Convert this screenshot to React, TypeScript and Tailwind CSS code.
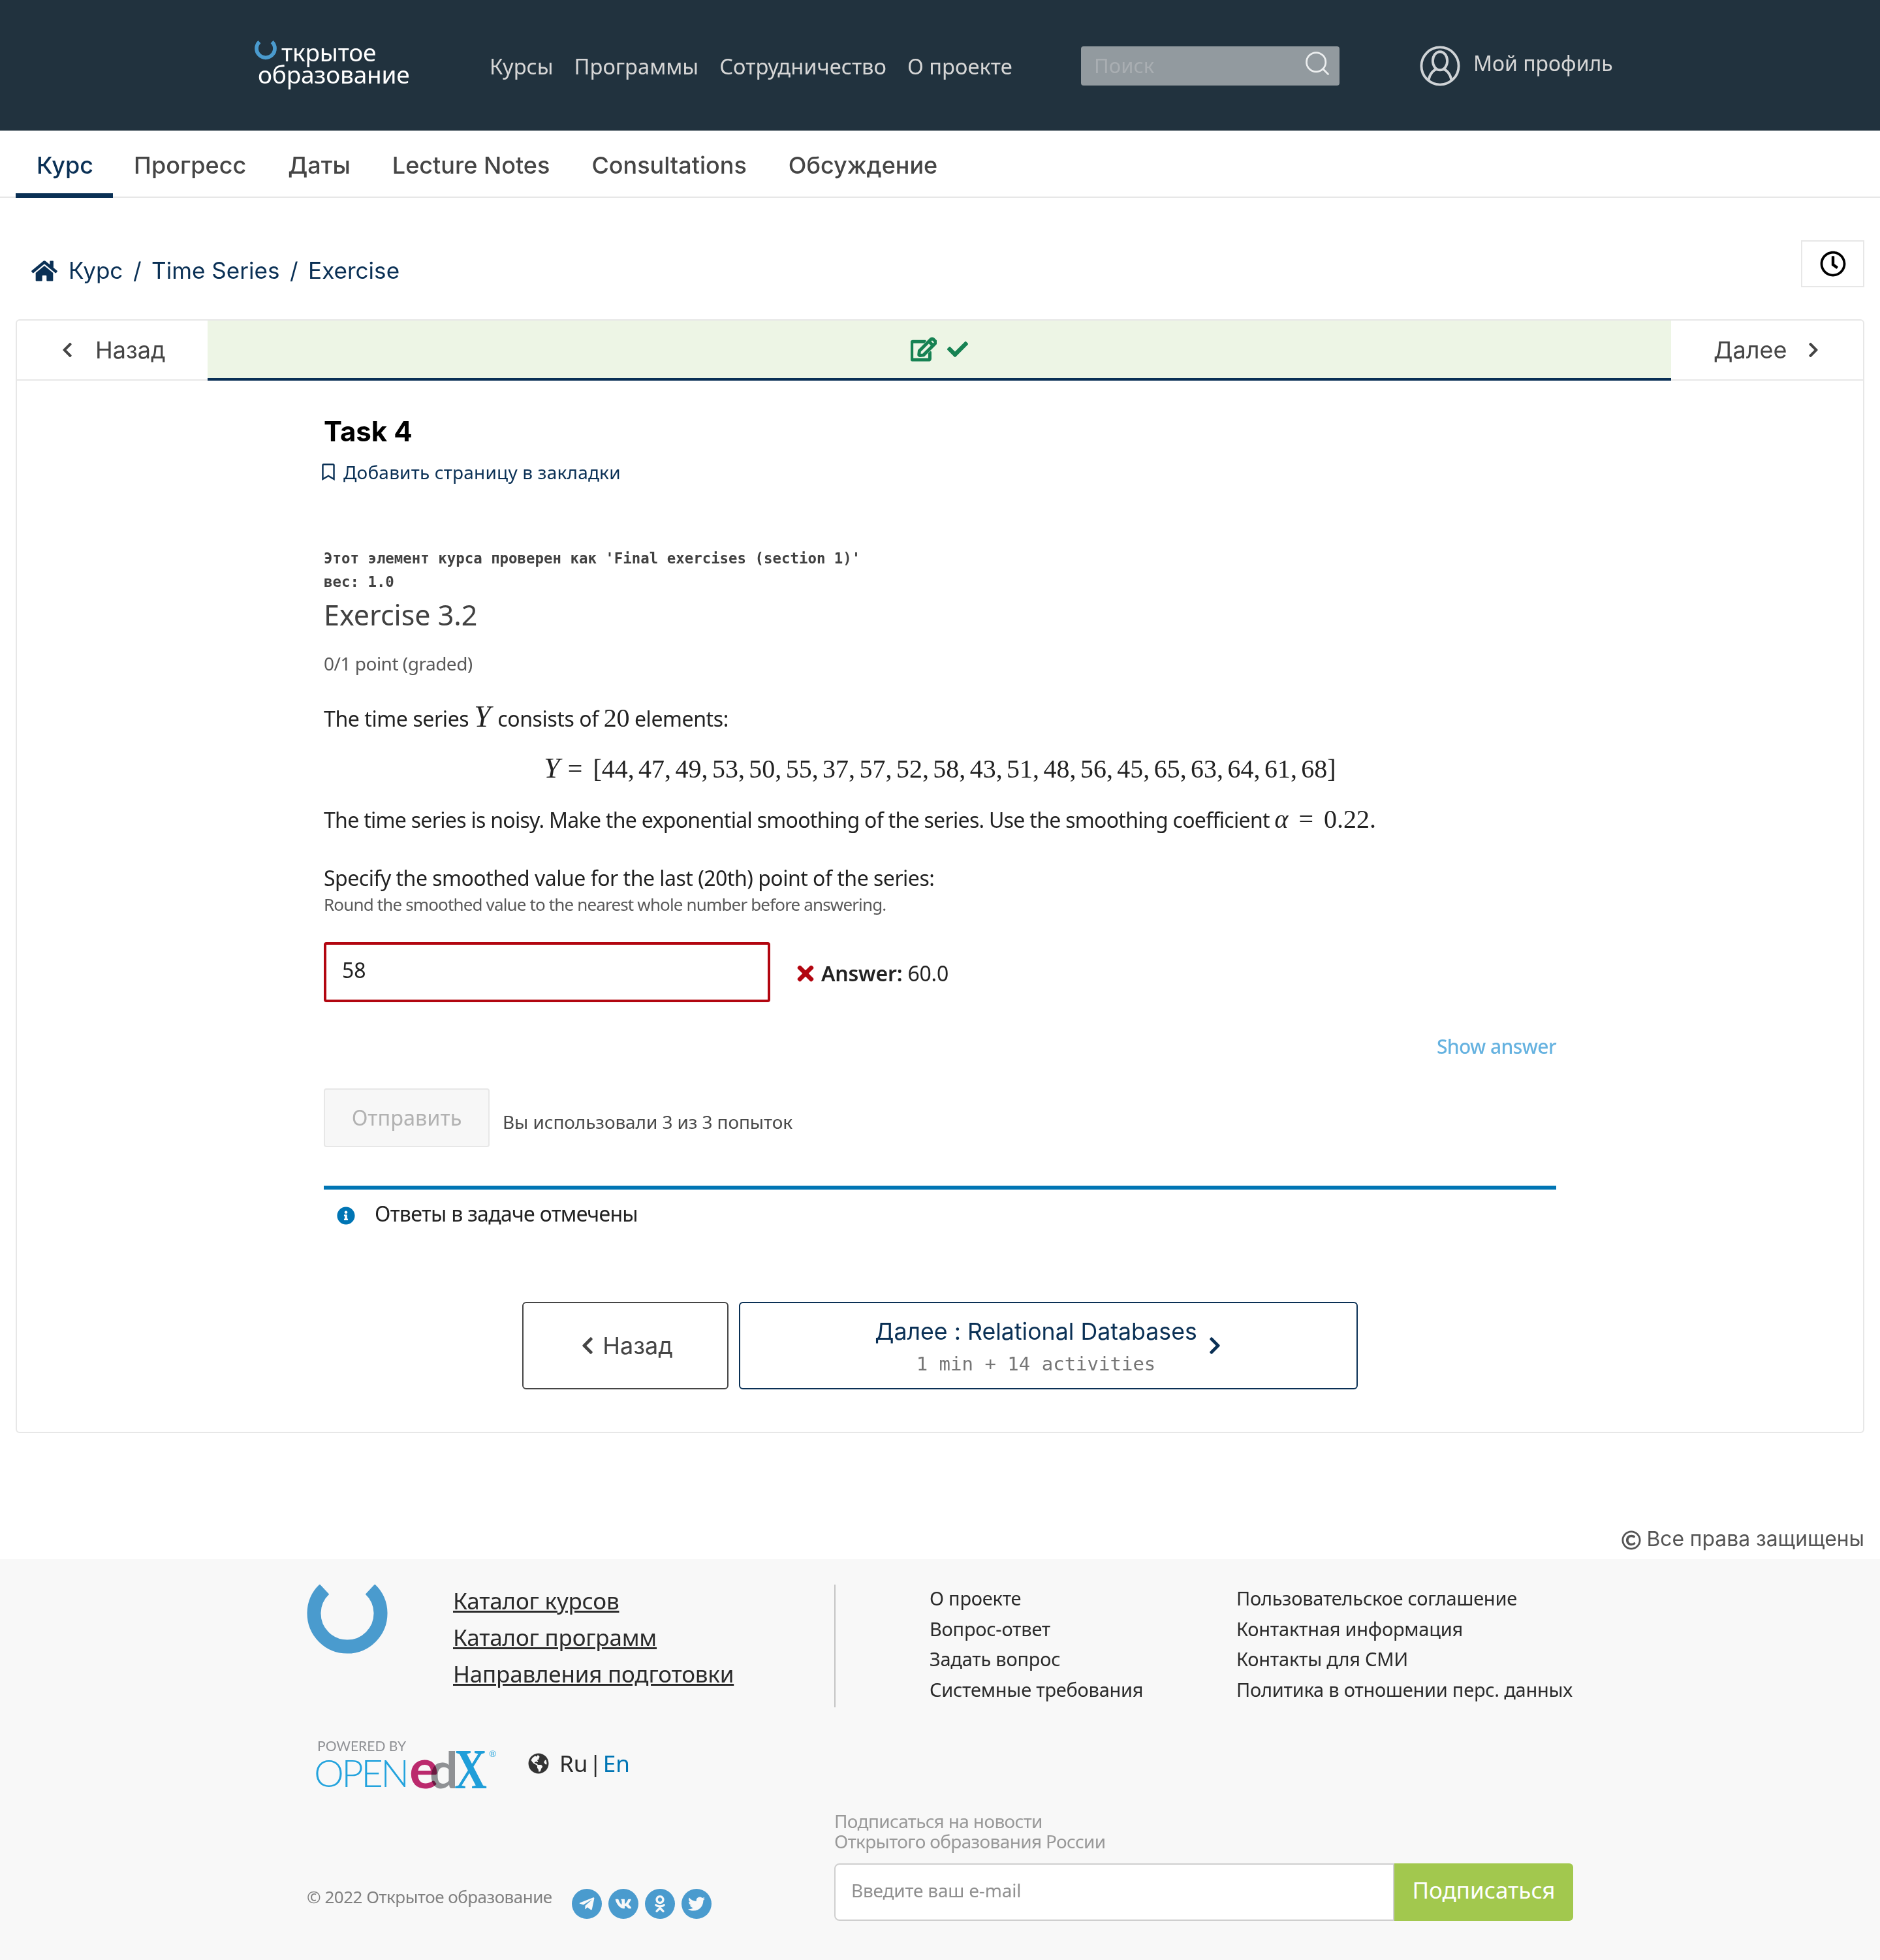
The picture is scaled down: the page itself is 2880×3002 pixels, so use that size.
import { Search } from 'lucide-react';
import {
  FaCheck,
  FaChevronLeft,
  FaChevronRight,
  FaGlobeAmericas,
  FaHome,
  FaInfoCircle,
  FaOdnoklassniki,
  FaRegBookmark,
  FaRegClock,
  FaRegCopyright,
  FaRegEdit,
  FaTelegramPlane,
  FaTimes,
  FaTwitter,
  FaVk,
} from 'react-icons/fa';

const inter = "font-['Inter',sans-serif]";
const noto = "font-['Noto_Sans',sans-serif]";
const serif = "font-['Liberation_Serif',serif]";

const navLinks = ['Курсы', 'Программы', 'Сотрудничество', 'О проекте'];
const tabs = ['Курс', 'Прогресс', 'Даты', 'Lecture Notes', 'Consultations', 'Обсуждение'];
const series = '44, 47, 49, 53, 50, 55, 37, 57, 52, 58, 43, 51, 48, 56, 45, 65, 63, 64, 61, 68';
const footerLeft = ['О проекте', 'Вопрос-ответ', 'Задать вопрос', 'Системные требования'];
const footerRight = [
  'Пользовательское соглашение',
  'Контактная информация',
  'Контакты для СМИ',
  'Политика в отношении перс. данных',
];

const Ring = ({ className }: { className: string }) => (
  <svg viewBox="0 0 124 108" className={className} fill="none">
    <path d="M27 7 A 51 51 0 1 0 97 7" stroke="#4a9bce" strokeWidth="21" />
  </svg>
);

const ProfileIcon = () => (
  <svg viewBox="0 0 64 64" className="h-[62px] w-[62px]" fill="none" stroke="#cfd3d6" strokeWidth="4">
    <circle cx="32" cy="32" r="29.5" />
    <ellipse cx="32" cy="24" rx="11.5" ry="14.5" />
    <path d="M14 54 C 16 44 22 38 27 37 M50 54 C 48 44 42 38 37 37" />
  </svg>
);

const EdxLogo = () => (
  <svg viewBox="0 -10 280 114" className="-mb-[20px] -mt-[10px] h-[114px] w-[280px]">
    <text x="4" y="21" fontFamily="Lato, sans-serif" fontSize="21" textLength="136" fill="#8f9195">
      POWERED BY
    </text>
    <text x="-1" y="76" fontFamily="Lato, sans-serif" fontWeight="300" fontSize="58" textLength="146" fill="#23a3dd">
      OPEN
    </text>
    <text x="145" y="78" fontFamily="Lato, sans-serif" fontWeight="700" fontSize="84" fill="#bb2a6d">
      e
    </text>
    <text x="176" y="78" fontFamily="Lato, sans-serif" fontWeight="700" fontSize="77" fill="#939598" className="mix-blend-multiply">
      d
    </text>
    <text
      x="214"
      y="78"
      fontFamily="'Liberation Serif', serif"
      fontWeight="700"
      fontSize="86"
      textLength="50"
      lengthAdjust="spacingAndGlyphs"
      fill="#1fa3df"
      className="mix-blend-multiply"
    >
      X
    </text>
    <text x="267" y="30" fontFamily="Lato, sans-serif" fontSize="14" fill="#23a3dd">
      ®
    </text>
  </svg>
);

const SocialIcon = ({ children }: { children: React.ReactNode }) => (
  <span className="flex h-[46px] w-[46px] items-center justify-center rounded-full bg-[#4a9bce] text-[26px] text-[#f8f8f8]">
    {children}
  </span>
);

export default function App() {
  return (
    <div className={`w-[2880px] bg-white ${noto}`}>
      <header className="flex h-[200px] items-center bg-[#21323e] pl-[390px]">
        <div className="relative mb-[2px] h-[72px] w-[360px] text-[37px] leading-[34px] tracking-[-0.2px] text-white">
          <Ring className="absolute left-0 top-[-1px] h-[30px] w-[34px]" />
          <div className="pl-[41px]">ткрытое</div>
          <div className="pl-[5px]">образование</div>
        </div>
        <nav className="mt-[4px] flex w-[906px] gap-[32px] text-[32.7px] text-[#d6d6d6]">
          {navLinks.map((item) => (
            <span key={item}>{item}</span>
          ))}
        </nav>
        <div className="mb-[-2px] flex h-[60px] w-[396px] items-center justify-between rounded-[4px] bg-[#929a9f] pl-[20px] pr-[12px]">
          <span className="mb-[2px] text-[31px] text-[#a9aeb2]">Поиск</span>
          <Search size={44} strokeWidth={1.5} color="#eceeef" className="mb-[8px]" />
        </div>
        <div className="mb-[-2px] ml-[123px] flex items-center gap-[20px] text-[32px] text-[#d6d6d6]">
          <ProfileIcon />
          <span className="mb-[8px]">Мой профиль</span>
        </div>
      </header>

      <div className={`flex h-[103px] border-b-2 border-[#e7e7e7] px-[24px] text-[36px] font-medium ${inter}`}>
        {tabs.map((tab, i) => (
          <div
            key={tab}
            className={`flex h-[103px] items-center ${i === 0 ? 'pl-[32px] pr-[30px]' : 'px-[32px]'} ${
              i === 0 ? 'border-b-[7px] border-[#0a3055] pt-[10px] text-[#0a3055]' : 'pt-[3px] text-[#454545]'
            }`}
          >
            {tab}
          </div>
        ))}
      </div>

      <div className={`flex h-[186px] items-start justify-between px-[24px] pt-[65px] text-[35.1px] text-[#0a3055] ${inter}`}>
        <div className="flex h-[71px] items-center pl-[24px] pt-[22px]">
          <FaHome size={40} className="mr-[17px]" />
          <span>Курс</span>
          <span className="mx-[15.5px]">/</span>
          <span>Time Series</span>
          <span className="mx-[15.5px]">/</span>
          <span>Exercise</span>
        </div>
        <div className="flex h-[72px] w-[97px] items-center justify-center border-2 border-[#e7e7e7]">
          <FaRegClock size={40} color="#000" />
        </div>
      </div>

      <main className="mx-[24px] h-[1706px] rounded-[6px] border-2 border-[#e7e7e7]">
        <div className={`flex h-[92px] text-[36px] text-[#454545] ${inter}`}>
          <div className="flex w-[292px] items-center gap-[30px] border-b-2 border-[#e7e7e7] pl-[64px]">
            <FaChevronLeft size={26} />
            <span>Назад</span>
          </div>
          <div className="flex flex-1 items-center justify-center gap-[16px] border-b-4 border-[#0a3055] bg-[#edf5e5] text-[#178253]">
            <FaRegEdit size={40} stroke="currentColor" strokeWidth={24} />
            <FaCheck size={32} />
          </div>
          <div className="flex w-[294px] items-center gap-[28px] border-b-2 border-[#e7e7e7] pl-[65px]">
            <span>Далее</span>
            <FaChevronRight size={26} />
          </div>
        </div>

        <section className="mx-[470px] pt-[48px]">
          <h1 className={`text-[42px] font-bold leading-[60px] text-black ${inter}`}>Task 4</h1>
          <div className="ml-[-6px] mt-[12px] flex items-center gap-[10px] text-[28px] leading-[40px] tracking-[0.2px] text-[#0a3055]">
            <FaRegBookmark size={26} />
            <span>Добавить страницу в закладки</span>
          </div>

          <div className="mt-[94px] font-['DejaVu_Sans_Mono',monospace] text-[22.4px] font-bold leading-[36px] text-[#414141]">
            <div>Этот элемент курса проверен как 'Final exercises (section 1)'</div>
            <div>вес: 1.0</div>
          </div>
          <h2 className="mt-[3px] text-[43px] leading-[60px] text-[#414141]">Exercise 3.2</h2>
          <div className="mt-[24px] text-[28px] leading-[40px] tracking-[-0.5px] text-[#595959]">0/1 point (graded)</div>

          <p className="mt-[40px] h-[44px] text-[32px] leading-[44px] tracking-[-0.4px] text-[#222]">
            The time series <span className={`${serif} mr-[3px] text-[46px] leading-[44px] italic`}>Y</span> consists of{' '}
            <span className={`${serif} text-[40px] leading-[44px]`}>20</span> elements:
          </p>
          <div className={`mt-[34px] text-center ${serif} text-[40px] leading-[46px] text-[#222] [word-spacing:-3.6px]`}>
            <i className="mr-[12px] text-[44px] leading-[46px]">Y</i>
            <span className="mr-[16px]">=</span>[{series}]
          </div>
          <p className="mt-[32px] h-[44px] text-[32px] leading-[44px] tracking-[-0.7px] text-[#222]">
            The time series is noisy. Make the exponential smoothing of the series. Use the smoothing coefficient{' '}
            <span className={`${serif} text-[40px] leading-[44px] tracking-normal`}>
              <i>α</i>
              <span className="mx-[6px]"> = </span>0.22.
            </span>
          </p>
          <p className="mt-[46px] text-[32px] leading-[44px] tracking-[-0.5px] text-[#222]">
            Specify the smoothed value for the last (20th) point of the series:
          </p>
          <p className="text-[26px] leading-[36px] tracking-[-0.85px] text-[#595959]">
            Round the smoothed value to the nearest whole number before answering.
          </p>

          <div className="mt-[40px] flex items-center">
            <input
              readOnly
              defaultValue="58"
              className="h-[92px] w-[684px] rounded-[4px] border-4 border-[#b20610] px-[24px] pb-[8px] text-[32px] text-[#222] outline-none"
            />
            <FaTimes size={36} color="#b20610" className="ml-[36px] mt-[4px]" />
            <span className="ml-[6px] mt-[4px] text-[32px] tracking-[-0.2px] text-[#222]">
              <b className="font-semibold">Answer:</b> 60.0
            </span>
          </div>

          <div className="mt-[46px] text-right text-[30px] font-medium leading-[44px] tracking-[-0.6px] text-[#65b2e0]">Show answer</div>

          <div className="mt-[42px] flex items-end">
            <div className="flex h-[90px] w-[254px] items-center justify-center rounded-[4px] border-2 border-[#e7e7e7] bg-[#f7f7f7] text-[32.5px] text-[#b2b2b2]">
              Отправить
            </div>
            <span className="ml-[20px] pb-[18px] text-[28px] tracking-[-0.1px] text-[#4a4a4a]">Вы использовали 3 из 3 попыток</span>
          </div>

          <div className="mt-[59px] flex h-[70px] items-center border-t-[6px] border-[#0075b4] pl-[20px] pt-[10px] text-[32px] tracking-[-0.7px] text-[#222]">
            <FaInfoCircle size={28} color="#0075b4" className="mt-[6px]" />
            <span className="ml-[30px]">Ответы в задаче отмечены</span>
          </div>

          <div className="ml-[304px] mt-[108px] flex gap-[16px]">
            <div className={`flex h-[134px] w-[316px] items-center justify-center gap-[8px] rounded-[6px] border-2 border-[#454545] text-[36px] text-[#454545] ${inter}`}>
              <FaChevronLeft size={30} />
              <span>Назад</span>
            </div>
            <div className="flex h-[134px] w-[948px] items-center justify-center gap-[12px] rounded-[6px] border-2 border-[#0a3055]">
              <div className="pl-[4px] pt-[6px] text-center">
                <div className={`text-[35.7px] leading-[50px] text-[#0a3055] ${inter}`}>Далее : Relational Databases</div>
                <div className="font-['DejaVu_Sans_Mono',monospace] text-[29px] leading-[50px] text-[#767676]">1 min + 14 activities</div>
              </div>
              <FaChevronRight size={30} color="#0a3055" />
            </div>
          </div>
        </section>
      </main>

      <div className={`flex h-[193px] items-end justify-end px-[24px] pb-[7px] text-[31.8px] text-[#555] ${inter}`}>
        <FaRegCopyright size={30} className="mb-[7px] mr-[8px]" />
        <span>Все права защищены</span>
      </div>

      <footer className="flex h-[614px] bg-[#f8f8f8] pl-[470px] pt-[39px]">
        <div className="flex w-[808px] flex-col">
          <div className="flex h-[190px]">
            <Ring className="h-[108px] w-[124px]" />
            <div className="ml-[100px] flex flex-col gap-[6px] text-[35px] leading-[50px] tracking-[-0.2px] text-[#2b2b2b] underline">
              <span>Каталог курсов</span>
              <span>Каталог программ</span>
              <span>Направления подготовки</span>
            </div>
          </div>
          <div className="ml-[12px] mt-[44px] flex items-center">
            <EdxLogo />
            <FaGlobeAmericas size={32} color="#333" className="mb-[4px] ml-[47px]" />
            <span className="mb-[4px] ml-[16px] text-[35px] text-[#2b2b2b]">
              Ru<span className="mx-[2px]">|</span>
              <span className="text-[#0075b4]">En</span>
            </span>
          </div>
          <div className="mt-[141px] flex items-center gap-[30px]">
            <span className="mb-[20px] text-[26px] tracking-[-0.5px] text-[#808080]">© 2022 Открытое образование</span>
            <div className="flex gap-[10px]">
              <SocialIcon><FaTelegramPlane /></SocialIcon>
              <SocialIcon><FaVk /></SocialIcon>
              <SocialIcon><FaOdnoklassniki /></SocialIcon>
              <SocialIcon><FaTwitter /></SocialIcon>
            </div>
          </div>
        </div>

        <div className="flex w-[1132px] flex-col">
          <div className="flex h-[188px] border-l-2 border-[#c4c4c4] pl-[144px] text-[29px] leading-[46.6px] tracking-[-0.25px] whitespace-nowrap text-[#2b2b2b]">
            <div className="-mt-[2px] w-[470px]">
              {footerLeft.map((item) => (
                <div key={item}>{item}</div>
              ))}
            </div>
            <div className="-mt-[2px]">
              {footerRight.map((item) => (
                <div key={item}>{item}</div>
              ))}
            </div>
          </div>
          <div className="mt-[159px] text-[28px] leading-[31px] tracking-[-0.65px] text-[#999]">
            <div>Подписаться на новости</div>
            <div>Открытого образования России</div>
          </div>
          <div className="mt-[18px] flex h-[88px] w-[1132px]">
            <input
              readOnly
              placeholder="Введите ваш e-mail"
              className="h-full w-[858px] rounded-l-[8px] border-2 border-[#cfcfcf] bg-white px-[24px] pb-[6px] text-[28px] tracking-[-0.2px] outline-none placeholder:text-[#909090]"
            />
            <div className="flex h-full w-[274px] items-center justify-center rounded-r-[6px] bg-[#a2c84e] pb-[6px] text-[35px] text-white">
              Подписаться
            </div>
          </div>
        </div>
      </footer>
    </div>
  );
}
